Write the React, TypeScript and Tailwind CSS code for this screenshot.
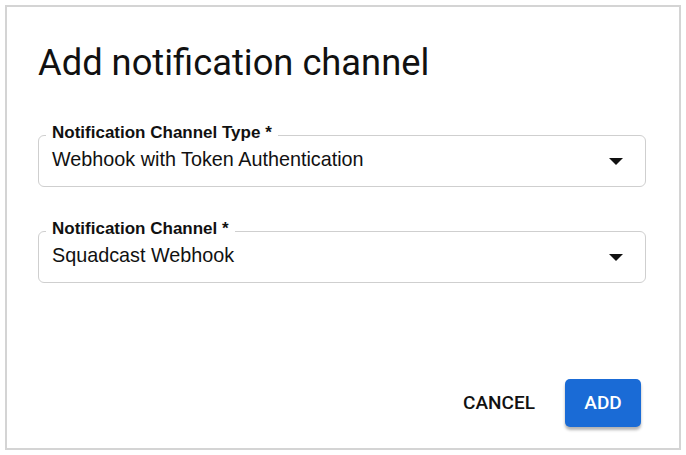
import React from 'react';

const fields = [
    { label: 'Notification Channel Type *', value: 'Webhook with Token Authentication' },
    { label: 'Notification Channel *', value: 'Squadcast Webhook' },
];

const Caret = () => (
    <svg width="14" height="7" viewBox="0 0 14 7" className="shrink-0">
        <path d="M0 0 L14 0 L7 7 Z" fill="#111" />
    </svg>
);

export default function App() {
    return (
        <div className="w-[686px] h-[455px] bg-white p-[5px] font-['Roboto',sans-serif]">
            <div className="h-full border-2 border-[#d4d4d4] flex flex-col pl-[31px] pr-[33px]">
                <h1 className="mt-[32px] text-[36.3px] leading-[48px] text-[#111] font-normal">
                    Add notification channel
                </h1>

                {/* select fields */}
                <div className="mt-[48px] flex flex-col gap-[44px]">
                    {fields.map(field => (
                        <div key={field.label} className="relative h-[52px] rounded-[6px] border border-[#cfcfcf] flex items-center pl-[13px] pr-[22px]">
                            <span className="absolute -top-[13px] left-[7px] px-[6px] bg-white font-['Liberation_Sans',Arial,sans-serif] text-[17px] leading-[20px] font-bold text-[#111]">
                                {field.label}
                            </span>
                            <span className="flex-1 pb-[5px] font-['Liberation_Sans',Arial,sans-serif] text-[19.8px] leading-[24px] text-[#111]">
                                {field.value}
                            </span>
                            <Caret />
                        </div>
                    ))}
                </div>

                <div className="mt-auto mb-[21px] mr-[5px] flex justify-end items-center gap-[30px]">
                    <button className="text-[19px] font-medium text-[#111]">CANCEL</button>
                    <button className="w-[76px] h-[48px] rounded-[5px] bg-[#1a6bd6] text-white text-[19px] font-medium shadow-[0_3px_3px_rgba(0,0,0,0.3)]">
                        ADD
                    </button>
                </div>
            </div>
        </div>
    );
}
